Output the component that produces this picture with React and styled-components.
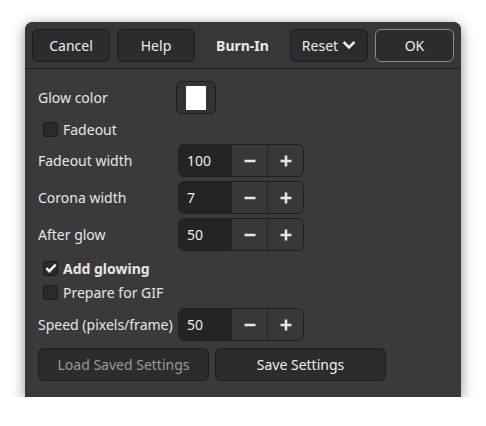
import styled, { createGlobalStyle } from "styled-components";

/* ===================== STYLES ===================== */

const Global = createGlobalStyle`
  html, body {
    margin: 0;
    background: #ffffff;
  }
  body {
    font-family: "Noto Sans", "DejaVu Sans", sans-serif;
    font-size: 14px;
    color: #e8e8e8;
  }
`;

const Page = styled.div`
  padding: 22px 0 0 25px;
`;

const Dialog = styled.div`
  width: 436px;
  height: 375px;
  background: #3a3a3a;
  border-radius: 8px 8px 0 0;
  box-shadow: 0 3px 14px rgba(0, 0, 0, 0.45);
  display: flex;
  flex-direction: column;
  overflow: hidden;
`;

const Header = styled.div`
  height: 47px;
  box-sizing: border-box;
  padding: 7px;
  display: flex;
  align-items: center;
  gap: 7px;
  background: #373737;
  border-bottom: 1px solid #222;
`;

const Button = styled.button`
  height: 33px;
  width: ${({ $w }) => $w || 78}px;
  box-sizing: border-box;
  padding: 0;
  border-radius: 6px;
  border: 1px solid ${({ $focus }) => ($focus ? "#8c8c8c" : "#1c1c1c")};
  background: #2c2c2c;
  color: ${({ $dim }) => ($dim ? "#9a9a9a" : "#ececec")};
  font: inherit;
  font-size: 14px;
  display: flex;
  align-items: center;
  justify-content: center;
  gap: 4px;
`;

const Title = styled.div`
  flex: 1;
  text-align: center;
  font-weight: 700;
  color: #e8e8e8;
`;

const Body = styled.div`
  padding: 12px 13px 0 13px;
  display: flex;
  flex-direction: column;
`;

const Row = styled.div`
  display: flex;
  align-items: center;
  height: ${({ $h }) => $h || 33}px;
  margin-top: ${({ $mt }) => $mt || 0}px;
`;

const Label = styled.div`
  width: ${({ $w }) => $w || 140}px;
  flex-shrink: 0;
  color: #e6e6e6;
`;

const ColorButton = styled.div`
  width: 40px;
  height: 33px;
  box-sizing: border-box;
  margin-left: -2px;
  border: 1px solid #1c1c1c;
  border-radius: 6px;
  background: #333;
  display: flex;
  align-items: center;
  justify-content: center;
`;

const Swatch = styled.div`
  width: 20px;
  height: 24px;
  background: #ffffff;
`;

const Check = styled.label`
  display: flex;
  align-items: center;
  gap: 5px;
  padding-left: 5px;
  font-weight: ${({ $bold }) => ($bold ? 700 : 400)};
  color: #e6e6e6;
`;

const Box = styled.span`
  width: 15px;
  height: 15px;
  box-sizing: border-box;
  border: 1px solid #1c1c1c;
  border-radius: 3px;
  background: #2a2a2a;
  display: flex;
  align-items: center;
  justify-content: center;
`;

const Spin = styled.div`
  display: flex;
  height: 33px;
  box-sizing: border-box;
  border: 1px solid #1f1f1f;
  border-radius: 6px;
  overflow: hidden;
`;

const SpinEntry = styled.div`
  width: 52px;
  background: #242424;
  padding-left: 8px;
  box-sizing: border-box;
  display: flex;
  align-items: center;
  color: #ececec;
`;

const SpinButton = styled.div`
  width: 35px;
  background: #383838;
  border-left: 1px solid #252525;
  display: flex;
  align-items: center;
  justify-content: center;
`;

const Actions = styled.div`
  display: flex;
  gap: 6px;
  margin-top: 7px;
`;

/* ===================== ICONS ===================== */

const Minus = () => (
  <svg width="14" height="14" viewBox="0 0 14 14">
    <path d="M1.5 7h11" stroke="#e6e6e6" strokeWidth="2.6" />
  </svg>
);

const Plus = () => (
  <svg width="14" height="14" viewBox="0 0 14 14">
    <path d="M1.5 7h11M7 1.5v11" stroke="#e6e6e6" strokeWidth="2.6" />
  </svg>
);

const Chevron = () => (
  <svg width="14" height="10" viewBox="0 0 14 10">
    <path d="M1.6 2l5.4 5.4 5.4-5.4" fill="none" stroke="#ececec" strokeWidth="2.5" />
  </svg>
);

const Tick = () => (
  <svg width="12" height="10" viewBox="0 0 12 10">
    <path d="M1.3 5.2l3 3 6.4-6.6" fill="none" stroke="#f2f2f2" strokeWidth="2.5" />
  </svg>
);

/* ===================== COMPONENT ===================== */

function SpinRow({ label, value, mt, lw }) {
  return (
    <Row $mt={mt}>
      <Label $w={lw}>{label}</Label>
      <Spin>
        <SpinEntry>{value}</SpinEntry>
        <SpinButton><Minus /></SpinButton>
        <SpinButton><Plus /></SpinButton>
      </Spin>
    </Row>
  );
}

function CheckRow({ label, checked, bold, mt, h }) {
  return (
    <Row $mt={mt} $h={h}>
      <Check $bold={bold}>
        <Box>{checked && <Tick />}</Box>
        {label}
      </Check>
    </Row>
  );
}

export default function App() {
  return (
    <Page>
      <Global />
      <Dialog>
        <Header>
          <Button>Cancel</Button>
          <Button>Help</Button>
          <Title>Burn-In</Title>
          <Button>
            Reset <Chevron />
          </Button>
          <Button $w={79} $focus>OK</Button>
        </Header>

        <Body>
          <Row>
            <Label>Glow color</Label>
            <ColorButton>
              <Swatch />
            </ColorButton>
          </Row>
          <CheckRow label="Fadeout" mt={4} h={22} />
          <SpinRow label="Fadeout width" value="100" mt={4} />
          <SpinRow label="Corona width" value="7" mt={4} />
          <SpinRow label="After glow" value="50" mt={4} />
          <CheckRow label="Add glowing" checked bold mt={5} h={24} />
          <CheckRow label="Prepare for GIF" h={24} />
          <SpinRow label="Speed (pixels/frame)" value="50" mt={4} />
          <Actions>
            <Button $w={171} $dim>Load Saved Settings</Button>
            <Button $w={171}>Save Settings</Button>
          </Actions>
        </Body>
      </Dialog>
    </Page>
  );
}
